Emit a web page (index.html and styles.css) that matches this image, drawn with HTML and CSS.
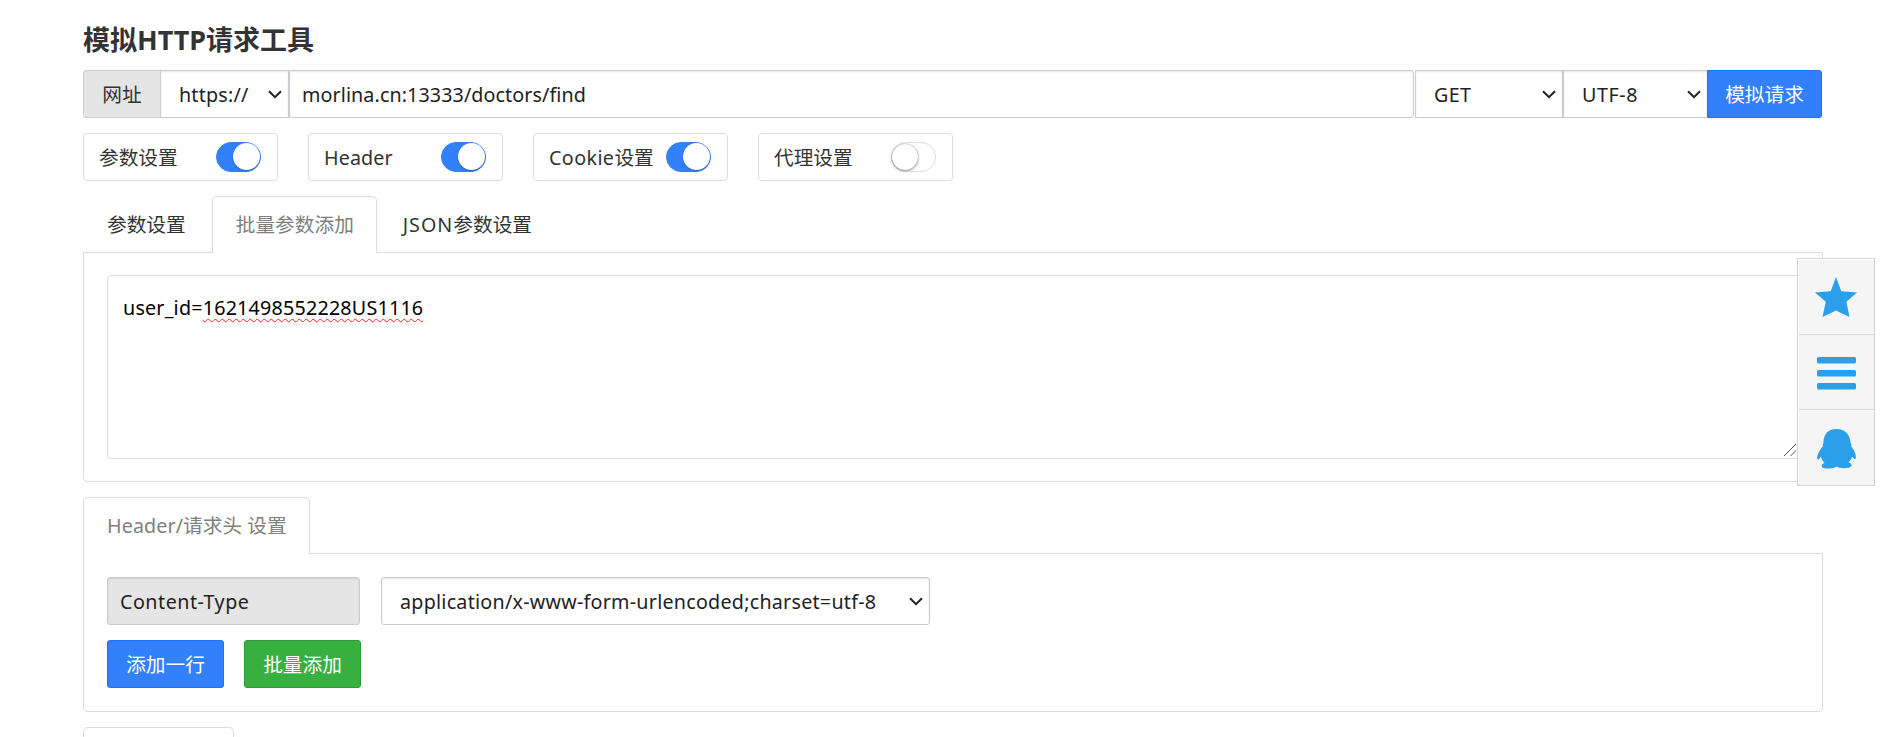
FILE: index.html
```html
<!DOCTYPE html>
<html lang="zh-CN">
<head>
<meta charset="utf-8">
<title>模拟HTTP请求工具</title>
<link rel="stylesheet" href="styles.css">
</head>
<body>
<main class="container">
  <h1 class="title">模拟HTTP请求工具</h1>
  <div class="request">
    <span class="addon">网址</span>
    <div class="select protocol"><span class="t-https">https://</span><svg class="chevron" viewBox="0 0 14 9"><path d="M1 1.2 7 7.2 13 1.2"/></svg></div>
    <div class="field url"><span class="t-url">morlina.cn:13333/doctors/find</span></div>
    <div class="select method"><span class="t-get">GET</span><svg class="chevron" viewBox="0 0 14 9"><path d="M1 1.2 7 7.2 13 1.2"/></svg></div>
    <div class="select charset"><span class="t-utf">UTF-8</span><svg class="chevron" viewBox="0 0 14 9"><path d="M1 1.2 7 7.2 13 1.2"/></svg></div>
    <button class="btn send">模拟请求</button>
  </div>
  <div class="toggles">
    <label class="toggle"><span>参数设置</span><i class="switch on"></i></label>
    <label class="toggle"><span class="t-header">Header</span><i class="switch on"></i></label>
    <label class="toggle"><span><span class="t-cookie">Cookie</span>设置</span><i class="switch on"></i></label>
    <label class="toggle"><span>代理设置</span><i class="switch"></i></label>
  </div>
  <section>
    <nav class="tabs">
      <a class="tab">参数设置</a>
      <a class="tab active second">批量参数添加</a>
      <a class="tab"><span class="t-json">JSON</span>参数设置</a>
    </nav>
    <div class="panel params">
      <div class="textarea"><span class="t-user">user_id=</span><span class="misspelt t-id">1621498552228US1116</span>
        <svg class="grip" viewBox="0 0 14 14"><path d="M1 13 13 1M7.5 13 13 7.5"/></svg>
      </div>
    </div>
  </section>
  <section>
    <nav class="tabs">
      <a class="tab active head"><span class="t-header">Header/</span>请求头 设置</a>
    </nav>
    <div class="panel headers">
      <div class="row">
        <div class="field name"><span class="t-ctype">Content-Type</span></div>
        <div class="select value"><span class="t-app">application/x-www-form-urlencoded;charset=utf-8</span><svg class="chevron" viewBox="0 0 14 9"><path d="M1 1.2 7 7.2 13 1.2"/></svg></div>
      </div>
      <div class="actions">
        <button class="btn">添加一行</button>
        <button class="btn green">批量添加</button>
      </div>
    </div>
  </section>
  <nav class="tabs clipped"><a class="tab active last"></a></nav>
</main>
<aside class="side">
  <a class="side-item"><svg viewBox="0 0 44 44"><path d="M22 1 27.3 15.2 43 16.4 32.4 25.8 35.5 41 22 34.6 8.5 41 11.8 25.8 1 16.4 16.7 15.2Z"/></svg></a>
  <a class="side-item"><svg viewBox="0 0 44 44"><rect x="3" y="6" width="39" height="6.5" rx="1.5"/><rect x="3" y="19" width="39" height="6.5" rx="1.5"/><rect x="3" y="32" width="39" height="6.5" rx="1.5"/></svg></a>
  <a class="side-item"><svg viewBox="0 0 44 44"><path d="M22.5 2C13.5 2 9.5 8 9.5 15.500C9 17 8.700 18 8.800 19.500C5 23.500 2.500 29 3.300 32C4.200 33.500 5.800 31.500 7 29.500C7.500 32.500 9 34.500 10.500 36C8 37 7 38.500 8 40C10 42.300 19 42 22.500 39.500C26 42 35 41.600 37.200 39.500C38.500 37.500 37 36 34.500 35.500C36 34 37.500 32 38 29.500C39.500 31.500 41 33 41.700 31.500C42.600 28 40.500 23.500 37.300 19.500C37.800 18 37.200 17 36.500 15.500C36 8 31.500 2 22.500 2Z"/></svg></a>
</aside>
</body>
</html>
```
FILE: styles.css
```css
* { box-sizing: border-box; }
body {
  margin: 0;
  height: 737px;
  overflow: hidden;
  background: #fff;
  color: #333;
  font: 19.7px/28px "Noto Sans", "Noto Sans CJK SC", sans-serif;
}
.container { width: 1740px; margin-left: 83px; }
.title { margin: 0; padding-top: 20px; height: 70px; font-size: 27px; line-height: 39px; font-weight: 700; white-space: nowrap; }
.request { display: flex; height: 48px; }
.addon { width: 77px; border: 1px solid #ccc; border-right: 0; border-radius: 4px 0 0 4px; background: #e5e5e5; line-height: 48px; text-align: center; }
.field, .select {
  display: flex;
  align-items: center;
  height: 48px;
  border: 1px solid #ccc;
  background: #fff;
  box-shadow: inset 0 1px 2px rgba(0,0,0,.1);
  color: #222;
  white-space: nowrap;
}
.field > span, .select > span, .toggle > span { padding-top: 2px; }
.select { justify-content: space-between; padding: 0 6px 0 18px; }
.chevron { width: 14px; height: 9px; flex: none; fill: none; stroke: #222; stroke-width: 2; }
.protocol { width: 129px; }
.url { width: 1125px; padding-left: 12px; border-radius: 0 3px 3px 0; }
.method { width: 148px; margin-left: 1px; }
.charset { width: 144px; border-right: 0; }
.t-https { letter-spacing: .2px; }
.t-url { letter-spacing: .1px; }
.t-get { letter-spacing: .3px; }
.t-utf { letter-spacing: .6px; }
.t-header { letter-spacing: .1px; }
.t-cookie { letter-spacing: .4px; }
.t-json { letter-spacing: 1px; }
.t-user, .t-id { letter-spacing: .21px; }
.t-ctype { letter-spacing: .5px; }
.t-app { letter-spacing: .25px; }
.btn {
  width: 117px;
  height: 48px;
  padding: 2px 0 0;
  border: 1px solid #1a70ff;
  border-radius: 3px;
  background: #3280fc;
  color: #fff;
  font: inherit;
}
.send { width: 115px; border-radius: 0 3px 3px 0; }
.green { border-color: #2f9836; background: #38b03f; }
.toggles { display: flex; gap: 30px; margin-top: 15px; }
.toggle { display: flex; align-items: center; justify-content: space-between; width: 195px; height: 48px; padding: 0 16px 0 15px; border: 1px solid #ddd; border-radius: 4px; white-space: nowrap; }
.switch { position: relative; width: 45px; height: 30px; border: 1px solid #ddd; border-radius: 15px; flex: none; }
.switch::after { content: ""; position: absolute; left: 0; top: 1px; width: 26px; height: 26px; border-radius: 50%; background: #fff; box-shadow: 0 1px 3px rgba(0,0,0,.4), 0 0 1px #888; }
.switch.on { border-color: #3280fc; background: #3280fc; }
.switch.on::after { left: 16px; width: 27px; height: 27px; top: 0; box-shadow: 0 1px 2px rgba(0,0,0,.25); }
.tabs { display: flex; height: 57px; margin-top: 15px; }
.tab { height: 57px; padding: 15px 24px 0; white-space: nowrap; }
.tab.active { border: 1px solid #ddd; border-bottom: 0; border-radius: 5px 5px 0 0; background: #fff; color: #808080; padding: 14px 0 0 23px; z-index: 1; }
.second { width: 165px; margin-left: 2px; }
.second + .tab { padding-left: 26px; }
.head { width: 227px; }
.clipped { height: 10px; }
.tab.last { width: 151px; height: 10px; padding: 0; }
.panel { margin-top: -1px; border: 1px solid #ddd; border-radius: 0 0 4px 4px; padding: 22px 23px; }
.params { height: 230px; }
.textarea { position: relative; width: 1693px; height: 184px; padding: 18px 15px; border: 1px solid #ddd; border-radius: 4px; color: #000; white-space: nowrap; }
.misspelt { text-decoration: underline wavy #f22 1.3px; text-underline-offset: 3px; text-decoration-skip-ink: none; }
.grip { position: absolute; right: 2px; bottom: 1px; width: 14px; height: 14px; fill: none; stroke: #555; }
.headers { height: 159px; padding: 23px; }
.row { display: flex; gap: 21px; }
.name { width: 253px; padding-left: 12px; border-radius: 3px; background: #e5e5e5; }
.value { width: 549px; border-radius: 3px; }
.actions { display: flex; gap: 20px; margin-top: 15px; }
.side { position: absolute; left: 1797px; top: 258px; width: 78px; height: 228px; border: 1px solid #d5d5d5; border-bottom-width: 2px; background: #fff; padding: 1px 0 0 1px; }
.side-item { display: flex; align-items: center; justify-content: center; height: 75px; padding: 2px 2px 0 0; border-bottom: 1px solid #d9d9d9; background: #f5f5f5; }
.side-item:last-child { border-bottom: 0; }
.side-item svg { width: 44px; height: 44px; fill: #2b9fea; }
```
